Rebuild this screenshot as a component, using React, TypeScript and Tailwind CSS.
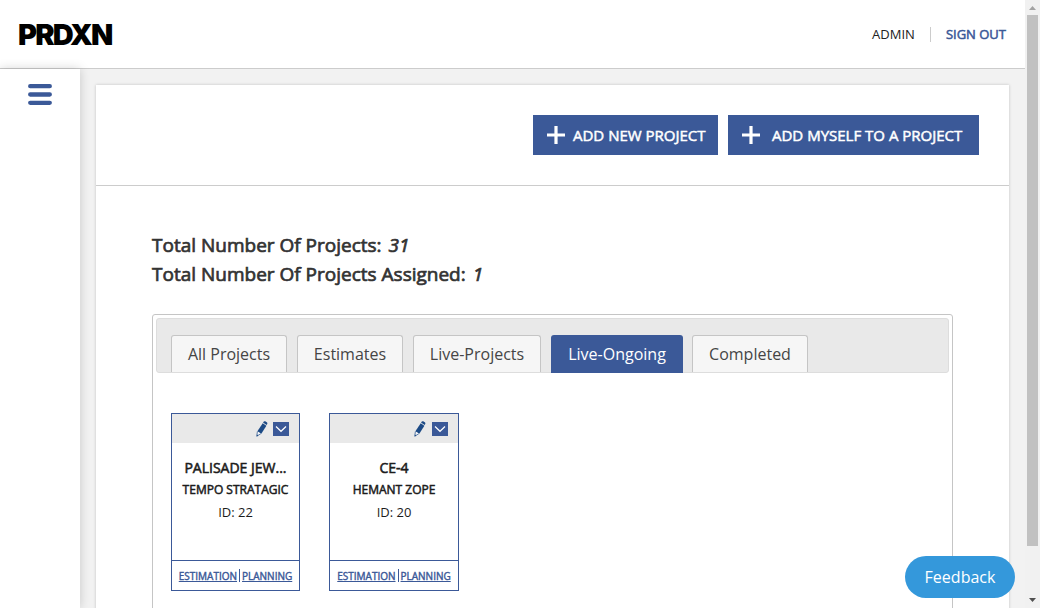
import React from "react";

type Project = { name: string; owner: string; id: number; width: string; iconGap: string };

const projects: Project[] = [
  { name: "PALISADE JEW...", owner: "TEMPO STRATAGIC", id: 22, width: "w-[129px]", iconGap: "gap-[5px]" },
  { name: "CE-4", owner: "HEMANT ZOPE", id: 20, width: "w-[130px]", iconGap: "gap-[6px]" },
];

const tabs = [
  { label: "All Projects", width: "w-[116px]", active: false },
  { label: "Estimates", width: "w-[106px]", active: false },
  { label: "Live-Projects", width: "w-[128px]", active: false },
  { label: "Live-Ongoing", width: "w-[132px]", active: true },
  { label: "Completed", width: "w-[116px] -ml-px", active: false },
];

function Plus() {
  return (
    <svg width="18" height="18" viewBox="0 0 18 18" className="shrink-0">
      <path d="M9 0v18M0 9h18" stroke="#fff" strokeWidth="3.2" />
    </svg>
  );
}

function MenuIcon() {
  return (
    <svg width="24" height="21" viewBox="0 0 24 21" className="shrink-0">
      <path d="M2.2 2.2h19.6M2.2 10.5h19.6M2.2 18.8h19.6" stroke="#3b5998" strokeWidth="4.3" strokeLinecap="round" />
    </svg>
  );
}

function Pencil() {
  return (
    <svg width="12" height="16" viewBox="0 0 12 16" className="shrink-0">
      <path d="M6.7 2.2 10.4 4.7 5.3 12.8 1.4 10.2z" fill="#1c4a86" />
      <path d="M7.4.9Q8-.2 9.2.3L10.8 1.2Q11.8 2 11.1 3.2L10.6 4 7 1.6z" fill="#1c4a86" />
      <path d="M1.4 10.4.8 15.2 4.8 12.7" fill="#f4f6f9" stroke="#1c4a86" strokeWidth=".7" />
      <path d="M.7 15.6.9 13.6 2.3 14.5z" fill="#1c4a86" />
    </svg>
  );
}

function ProjectCard({ project }: { project: Project }) {
  return (
    <article className={`${project.width} flex h-[178px] flex-col border border-[#3b5998] text-center text-[#1c1c1c]`}>
      <div className={`${project.iconGap} flex h-[29px] items-center justify-end bg-[#e9e9e9] pr-[10px] pt-px`}>
        <Pencil />
        <span className="flex h-[14px] w-4 items-center justify-center bg-[#3b5998]">
          <svg width="12" height="8" viewBox="0 0 12 8">
            <path d="M1 1.5 6 6.3l5-4.8" fill="none" stroke="#fff" strokeWidth="1.2" />
          </svg>
        </span>
      </div>
      <div className="flex grow flex-col items-center pt-[14px] whitespace-nowrap">
        <h3 className="text-[14px] leading-[22px] [-webkit-text-stroke:0.55px]">{project.name}</h3>
        <h4 className="text-[12px] leading-[22px] [-webkit-text-stroke:0.5px]">{project.owner}</h4>
        <p className="text-[13px] leading-[22px]">ID: {project.id}</p>
      </div>
      <div className="flex h-[30px] items-center justify-center border-t border-[#3b5998] text-[10px] leading-[14px] text-[#3b5998] [-webkit-text-stroke:0.4px]">
        <a className="underline">ESTIMATION</a>
        <span className="mx-[2px] h-[13px] w-px bg-[#3b5998]" />
        <a className="underline">PLANNING</a>
      </div>
    </article>
  );
}

export default function App() {
  return (
    <div className="relative flex h-[608px] w-[1040px] overflow-hidden bg-white font-['Open_Sans',sans-serif]">
      <div className="flex w-[1025px] flex-col">
        <header className="flex h-[69px] shrink-0 items-center justify-between border-b border-[#ccc] pr-[19px] pl-[18px]">
          <span className="font-['Inter',sans-serif] text-[29px] leading-none font-black tracking-[-1.8px] text-black">PRDXN</span>
          <nav className="flex items-center text-[13px] leading-[18px]">
            <span className="text-[#222]">ADMIN</span>
            <span className="mx-[15px] h-[15px] w-px bg-[#ccc]" />
            <a className="text-[#3b5998] [-webkit-text-stroke:0.52px]">SIGN OUT</a>
          </nav>
        </header>
        <div className="flex min-h-0 grow bg-[#f2f2f2]">
          <aside className="flex w-20 shrink-0 flex-col items-center bg-white pt-[15px] shadow-[0_0_10px_rgba(0,0,0,0.18)]">
            <MenuIcon />
          </aside>
          <main className="mt-4 ml-4 h-[600px] w-[913px] shrink-0 bg-white shadow-[0_0_3px_rgba(0,0,0,0.2)]">
            <div className="flex h-[101px] items-center justify-end gap-[10px] border-b border-[#ccc] pr-[30px] text-[15px] whitespace-nowrap text-white [-webkit-text-stroke:0.5px]">
              <button className="flex h-10 w-[185px] items-center gap-[8px] bg-[#3b5998] pl-[14px]">
                <Plus />
                ADD NEW PROJECT
              </button>
              <button className="flex h-10 w-[251px] items-center gap-[12px] bg-[#3b5998] pl-[14px]">
                <Plus />
                ADD MYSELF TO A PROJECT
              </button>
            </div>
            <div className="pt-[45px] pl-[56px]">
              <div className="text-[19px] leading-[29px] text-[#333] [-webkit-text-stroke:0.7px]">
                <h2>Total Number Of Projects: <em className="ml-[2px]">31</em></h2>
                <h2>Total Number Of Projects Assigned: <em className="ml-[2px]">1</em></h2>
              </div>
              <section className="mt-[25px] h-[400px] w-[801px] rounded-[3px] border border-[#c5c5c5] p-[3px]">
                <div className="flex h-[55px] items-end gap-[10px] rounded-[3px] border border-[#ddd] bg-[#e9e9e9] pl-[14px]">
                  {tabs.map((tab) => (
                    <button
                      key={tab.label}
                      className={
                        tab.active
                          ? `${tab.width} -mb-px h-[38px] rounded-t-[3px] bg-[#3b5998] text-[16px] text-white`
                          : `${tab.width} h-[37px] rounded-t-[3px] border border-b-0 border-[#c5c5c5] bg-[#f6f6f6] text-[16px] text-[#454545]`
                      }
                    >
                      {tab.label}
                    </button>
                  ))}
                </div>
                <div className="flex gap-[29px] pt-10 pl-[15px]">
                  {projects.map((project) => (
                    <ProjectCard key={project.id} project={project} />
                  ))}
                </div>
              </section>
            </div>
          </main>
        </div>
      </div>
      <div className="flex w-[15px] flex-col items-center bg-[#f1f1f1]">
        <svg width="15" height="15" viewBox="0 0 15 15" className="shrink-0">
          <path d="M4 10h7L7.5 6z" fill="#a3a3a3" />
        </svg>
        <div className="h-[531px] w-[11px] bg-[#c1c1c1]" />
        <svg width="15" height="15" viewBox="0 0 15 15" className="mt-auto shrink-0">
          <path d="M4 5h7L7.5 9z" fill="#505050" />
        </svg>
      </div>
      <button className="absolute top-[556px] left-[905px] h-[42px] w-[110px] rounded-full bg-[#3498db] text-[16px] text-white">
        Feedback
      </button>
    </div>
  );
}
